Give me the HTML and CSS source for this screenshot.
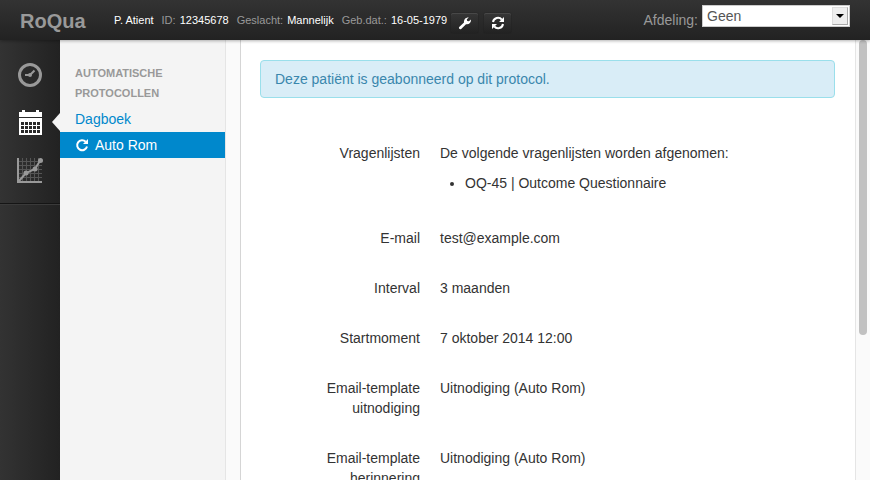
FILE: index.html
```html
<!DOCTYPE html>
<html lang="nl">
<head>
<meta charset="utf-8">
<title>RoQua</title>
<link rel="stylesheet" href="styles.css">
</head>
<body>
<header class="topbar">
  <a class="brand" href="#">RoQua</a>
  <ul class="patient">
    <li><strong>P. Atient</strong></li>
    <li>ID: <strong>12345678</strong></li>
    <li>Geslacht: <strong>Mannelijk</strong></li>
    <li>Geb.dat.: <strong>16-05-1979</strong></li>
  </ul>
  <div class="actions">
    <button type="button" class="tool" aria-label="Bewerken">
      <svg width="14" height="14" viewBox="0 0 14 14"><path d="M1.200 11 6 6.600C5.600 3.500 7.500 1.200 10.800 1.400L8.800 3.300l.4 1.700 1.700.3 2.100-1.800C13.200 6.700 11 8.700 8 8.200L3.200 12.900C2 13.800.2 12.200 1.200 11z" fill="#fff"/></svg>
    </button>
    <button type="button" class="tool" aria-label="Vernieuwen">
      <svg width="14" height="14" viewBox="0 0 14 14" fill="none" stroke="#fff" stroke-width="2"><path d="M2 6a5 5 0 0 1 8.800-2.400M12 8a5 5 0 0 1-8.800 2.400"/><path d="M13 1v5H8zM1 13V8h5z" fill="#fff" stroke="none"/></svg>
    </button>
  </div>
  <div class="department">
    <label for="department">Afdeling:</label>
    <div class="select">
      <select id="department"><option>Geen</option></select>
      <span class="arrow"></span>
    </div>
  </div>
</header>
<div class="workspace">
  <nav class="rail" aria-label="Hoofdmenu">
    <a href="#" aria-label="Dashboard">
      <svg width="26" height="26" viewBox="0 0 26 26" fill="none" stroke="#999"><circle cx="13" cy="14" r="10.500" stroke-width="3"/><path d="M8 14h5l4.500-4.500" stroke-width="2"/><circle cx="13" cy="14" r="2" fill="#999" stroke="none"/></svg>
    </a>
    <a href="#" class="current" aria-label="Kalender">
      <svg width="26" height="26" viewBox="0 0 26 26"><path d="M2 3h3V1h3v2h11V1h3v2h3v5H2zM2 9h23v17H2z" fill="#fff"/><path d="M4 13h3v3H4zM8 13h3v3H8zM12 13h3v3h-3zM16 13h3v3h-3zM20 13h3v3h-3zM4 17h3v3H4zM8 17h3v3H8zM12 17h3v3h-3zM16 17h3v3h-3zM20 17h3v3h-3zM4 21h3v3H4zM8 21h3v3H8zM12 21h3v3h-3zM16 21h3v3h-3zM20 21h3v3h-3z" fill="#2a2a2a"/></svg>
    </a>
    <a href="#" aria-label="Grafieken">
      <svg width="26" height="26" viewBox="0 0 26 26" fill="none"><path d="M5.500 1v24M9.500 1v24M13.500 1v24M17.500 1v24M21.500 1v24M2 4.500h23M2 8.500h23M2 12.500h23M2 16.500h23M2 20.500h23" stroke="#555"/><path d="M1 1v24h24" stroke="#999" stroke-width="2"/><path d="m2 24 7-8 9-4 5.500-9" stroke="#999" stroke-width="2"/><g fill="#999"><circle cx="9" cy="16" r="2.500"/><circle cx="18" cy="12" r="2.500"/><circle cx="23.500" cy="3.500" r="2.500"/></g></svg>
    </a>
  </nav>
  <aside class="sidebar">
    <h2>Automatische protocollen</h2>
    <a href="#">Dagboek</a>
    <a href="#" class="active"><svg width="14" height="14" viewBox="0 0 14 14"><path d="M10.700 3.700A5 5 0 1 0 12 8.500" fill="none" stroke="#fff" stroke-width="2"/><path d="M13 1v5H8z" fill="#fff"/></svg>Auto Rom</a>
  </aside>
  <main class="content">
    <p class="alert">Deze patiënt is geabonneerd op dit protocol.</p>
    <dl class="details">
      <dt>Vragenlijsten</dt>
      <dd>De volgende vragenlijsten worden afgenomen:
        <ul><li>OQ-45 | Outcome Questionnaire</li></ul>
      </dd>
      <dt>E-mail</dt><dd>test@example.com</dd>
      <dt>Interval</dt><dd>3 maanden</dd>
      <dt>Startmoment</dt><dd>7 oktober 2014 12:00</dd>
      <dt>Email-template uitnodiging</dt><dd>Uitnodiging (Auto Rom)</dd>
      <dt>Email-template herinnering</dt><dd>Uitnodiging (Auto Rom)</dd>
    </dl>
  </main>
  <div class="track"><div class="thumb"></div></div>
</div>
</body>
</html>
```
FILE: styles.css
```css
* { box-sizing: border-box; }
body {
  margin: 0;
  height: 100vh;
  display: flex;
  flex-direction: column;
  overflow: hidden;
  font: 14px/20px "Liberation Sans", Arial, sans-serif;
  color: #333;
  background: #fff;
}
a { color: #08c; text-decoration: none; }
ul { margin: 0; padding: 0; list-style: none; }

.topbar {
  flex: none;
  display: flex;
  align-items: center;
  height: 40px;
  padding: 0 20px;
  color: #999;
  background: linear-gradient(#333, #222);
  box-shadow: 0 1px 3px rgba(0, 0, 0, .3);
  position: relative;
  z-index: 1;
}
.brand {
  width: 94px;
  padding-top: 2px;
  font-size: 20px;
  font-weight: bold;
  color: #999;
}
.patient { display: flex; gap: 8px; font-size: 11px; white-space: nowrap; }
.patient strong { font-weight: normal; color: #fff; margin-left: 1px; }
.patient li:first-child strong { margin-left: 0; }
.actions { display: flex; gap: 6px; margin-left: 4px; padding-top: 6px; }
.tool {
  display: flex;
  align-items: center;
  justify-content: center;
  width: 27px;
  height: 20px;
  padding: 0;
  border: 0;
  border-radius: 2px;
  background: linear-gradient(#363636, #222);
  box-shadow: inset 0 1px 0 #484848, 0 0 1px #111;
}
.department { display: flex; gap: 4px; margin-left: auto; align-self: flex-start; padding-top: 5px; }
.department label { padding-top: 5px; }
.select { position: relative; }
.select select {
  display: block;
  width: 148px;
  height: 22px;
  padding: 0 4px;
  border: 1px solid #ccc;
  border-radius: 0;
  appearance: none;
  font: inherit;
  color: #555;
  background: #fff;
}
.arrow {
  position: absolute;
  top: 2px;
  right: 2px;
  width: 16px;
  height: 18px;
  border: 1px solid;
  border-color: #ddd #aaa #aaa #ddd;
  background: #eee;
  pointer-events: none;
}
.arrow::after {
  content: "";
  position: absolute;
  top: 6px;
  left: 3px;
  border: 4px solid transparent;
  border-top-color: #000;
  border-bottom: 0;
}

.workspace { flex: 1; min-height: 0; display: flex; }
.rail {
  flex: none;
  width: 60px;
  padding-top: 10px;
  background: linear-gradient(90deg, #333, #222);
}
.rail::after {
  content: "";
  display: block;
  height: 2px;
  margin-top: 9px;
  background: linear-gradient(#151515 50%, #3a3a3a 50%);
}
.rail a {
  position: relative;
  display: flex;
  align-items: center;
  justify-content: center;
  height: 48px;
}
.current::after {
  content: "";
  position: absolute;
  right: 0;
  top: 15px;
  border: 9px solid transparent;
  border-right: 8px solid #f4f4f4;
  border-left: 0;
}
.sidebar {
  flex: none;
  width: 166px;
  padding-top: 23px;
  border-right: 1px solid #e5e5e5;
  background: #f4f4f4;
}
.sidebar h2 {
  margin: 0;
  padding: 0 15px 3px;
  font-size: 11px;
  line-height: 20px;
  text-transform: uppercase;
  color: #999;
}
.sidebar a {
  display: flex;
  align-items: center;
  gap: 6px;
  padding: 3px 15px;
}
.sidebar .active { color: #fff; background: #08c; }
.content {
  flex: 1;
  min-width: 0;
  overflow: hidden;
  padding: 20px 20px 20px 19px;
  border-left: 1px solid #d5d5d5;
  margin-left: 14px;
  box-shadow: -14px 0 0 #fafafa;
}
.alert {
  margin: 0 0 45px;
  padding: 8px 14px;
  border: 1px solid #9adfeb;
  border-radius: 4px;
  color: #3a87ad;
  background: #d9edf7;
}
.details {
  display: grid;
  grid-template-columns: 160px 1fr;
  gap: 30px 20px;
  margin: 0;
}
.details dt { text-align: right; }
.details dd { margin: 0; }
.details ul { margin: 10px 0 5px 25px; list-style: disc; }
.track {
  flex: none;
  width: 15px;
  padding: 0 3px;
  border-left: 1px solid #e5e5e5;
  background: #fafafa;
}
.thumb { width: 8px; height: 67%; border-radius: 4px; background: #c1c1c1; }
```
